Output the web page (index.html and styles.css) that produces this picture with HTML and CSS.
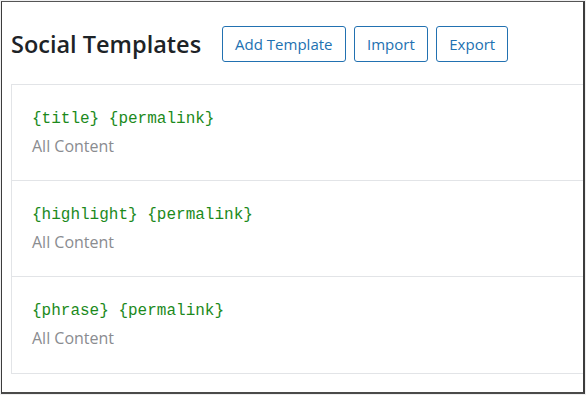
FILE: index.html
```html
<!DOCTYPE html>
<html lang="en">
<head>
  <meta charset="UTF-8" />
  <title>Social Templates</title>
  <link rel="stylesheet" href="styles.css">
</head>
<body>
  <div class="frame">
    <div class="wrap">
      <!-- Page heading + actions -->
      <div class="page-head">
        <h1>Social Templates</h1>
        <div class="actions">
          <button class="btn">Add Template</button>
          <button class="btn">Import</button>
          <button class="btn">Export</button>
        </div>
      </div>

      <div class="templates">
        <div class="template">
          <div class="tpl-code">{title} {permalink}</div>
          <div class="tpl-scope">All Content</div>
        </div>
        <div class="template">
          <div class="tpl-code">{highlight} {permalink}</div>
          <div class="tpl-scope">All Content</div>
        </div>
        <div class="template">
          <div class="tpl-code">{phrase} {permalink}</div>
          <div class="tpl-scope">All Content</div>
        </div>
      </div>
    </div>
  </div>
</body>
</html>
```

FILE: styles.css
```css
body {
  margin: 0;
  padding: 0;
  background: #f0f0f1;
  font-family: 'Open Sans', 'Noto Sans', sans-serif;
}

.frame {
  margin: 1px 0 0 1px;
  width: 581px;
  height: 390px;
  background: #fff;
  border-left: 1px solid #3c3c3c;
  border-top: 1px solid #555;
  border-right: 2px solid #3c3c3c;
  border-bottom: 2px solid #4a4a4a;
  overflow: hidden;
}

.wrap {
  padding: 24px 0 0 9px;
}

.page-head {
  display: flex;
  align-items: center;
  gap: 21px;
}

h1 {
  margin: 0;
  font-size: 23.5px;
  font-weight: 600;
  color: #1d2327;
}

.actions {
  display: flex;
  gap: 8.5px;
}

.btn {
  height: 36px;
  padding: 0 12px;
  background: #fff;
  border: 1.5px solid #2271b1;
  border-radius: 3px;
  color: #2271b1;
  font-family: 'Open Sans', 'Noto Sans', sans-serif;
  font-size: 15px;
}

.templates {
  margin-top: 22px;
  width: 640px;
  border: 1px solid #e2e4e7;
  background: #fff;
}

.template {
  height: 96px;
  padding: 20px 0 0 20px;
  box-sizing: border-box;
  border-bottom: 1px solid #e2e4e7;
}

.template:last-child {
  border-bottom: none;
}

.tpl-code {
  font-family: 'Liberation Mono', 'DejaVu Sans Mono', monospace;
  font-size: 16px;
  color: #1c8a1c;
  line-height: 28px;
}

.tpl-scope {
  font-size: 16px;
  color: #8a8c90;
  line-height: 27px;
}
```
